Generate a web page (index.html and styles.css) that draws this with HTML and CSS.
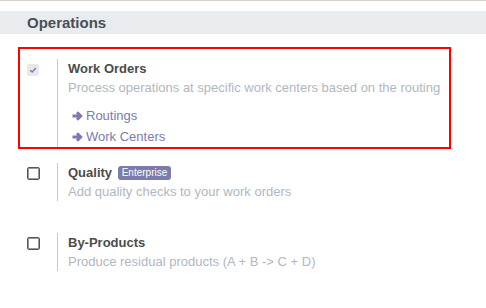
FILE: index.html
```html
<!DOCTYPE html>
<html>

<head>
    <meta name="viewport" content="width=device-width, initial-scale=1.0">
    <link rel="stylesheet" href="styles.css">
</head>

<body>
    <div class="page">
        <h2 class="section-title">Operations</h2>
        <div class="settings">
            <div class="setting highlight">
                <div class="left-pane">
                    <span class="check checked">
                        <svg viewBox="0 0 10 10" width="8" height="8">
                            <path d="M1.5 5.2 L4 7.5 L8.5 2.5" fill="none" stroke="#7c7bad" stroke-width="1.8" />
                        </svg>
                    </span>
                </div>
                <div class="right-pane">
                    <div class="label">Work Orders</div>
                    <div class="desc">Process operations at specific work centers based on the routing</div>
                    <div class="links">
                        <a class="link" href="#">
                            <svg class="arrow" viewBox="0 0 11 10" width="11" height="10">
                                <path d="M0.5 5 H8.5 M5 1.3 L8.7 5 L5 8.7" />
                            </svg>Routings</a>
                        <a class="link" href="#">
                            <svg class="arrow" viewBox="0 0 11 10" width="11" height="10">
                                <path d="M0.5 5 H8.5 M5 1.3 L8.7 5 L5 8.7" />
                            </svg>Work Centers</a>
                    </div>
                </div>
            </div>
            <div class="setting quality">
                <div class="left-pane">
                    <span class="check"></span>
                </div>
                <div class="right-pane">
                    <div class="label">Quality <span class="badge">Enterprise</span></div>
                    <div class="desc">Add quality checks to your work orders</div>
                </div>
            </div>
            <div class="setting">
                <div class="left-pane">
                    <span class="check"></span>
                </div>
                <div class="right-pane">
                    <div class="label">By-Products</div>
                    <div class="desc">Produce residual products (A + B -&gt; C + D)</div>
                </div>
            </div>
        </div>
    </div>
</body>

</html>
```

FILE: styles.css
```css
* {
    box-sizing: border-box;
}

body {
    margin: 0;
    background-color: #fff;
    font-family: "Liberation Sans", Arial, sans-serif;
}

.page {
    border-top: 1px solid #d4d4d4;
    padding-top: 10px;
}

.section-title {
    margin: 0;
    height: 23px;
    line-height: 23px;
    padding-left: 27px;
    background-color: #e9ecef;
    color: #4a4f54;
    font-size: 15px;
    font-weight: bold;
}

.settings {
    padding-left: 18px;
    padding-top: 13px;
}

.setting {
    display: flex;
    width: 433px;
    border: 2px solid transparent;
    padding-top: 10px;
    margin-bottom: 18px;
}

.setting.highlight {
    border-color: #f00;
    margin-bottom: 2px;
}

.left-pane {
    width: 37px;
    padding-left: 7px;
    padding-top: 4px;
}

.right-pane {
    border-left: 1px solid #c9c9c9;
    padding-left: 10px;
    font-size: 13px;
    line-height: 19px;
}

.check {
    display: block;
    width: 13px;
    height: 13px;
    border: 1px solid #555;
    border-radius: 2px;
    box-shadow: inset 0 0 0 1px #999;
    background-color: #fff;
}

.check.checked {
    width: 12px;
    height: 12px;
    margin-top: 1px;
    border: none;
    box-shadow: none;
    background-color: #e6e8ec;
    display: flex;
    align-items: center;
    justify-content: center;
}

.label {
    color: #4c4c4c;
    font-weight: bold;
}

.desc {
    color: #b0b7c0;
}

.links {
    margin-top: 8px;
}

.link {
    display: block;
    height: 21px;
    line-height: 21px;
    padding-left: 4px;
    color: #7c7bad;
    text-decoration: none;
}

.arrow {
    fill: none;
    stroke: #7c7bad;
    stroke-width: 3;
    margin-right: 3px;
    vertical-align: -1px;
}

.badge {
    display: inline-block;
    margin-left: 2px;
    padding: 0 4px;
    height: 14px;
    line-height: 14px;
    border-radius: 3px;
    background-color: #7c7bad;
    color: #fff;
    font-size: 10px;
    font-weight: normal;
    vertical-align: 1px;
}
```
